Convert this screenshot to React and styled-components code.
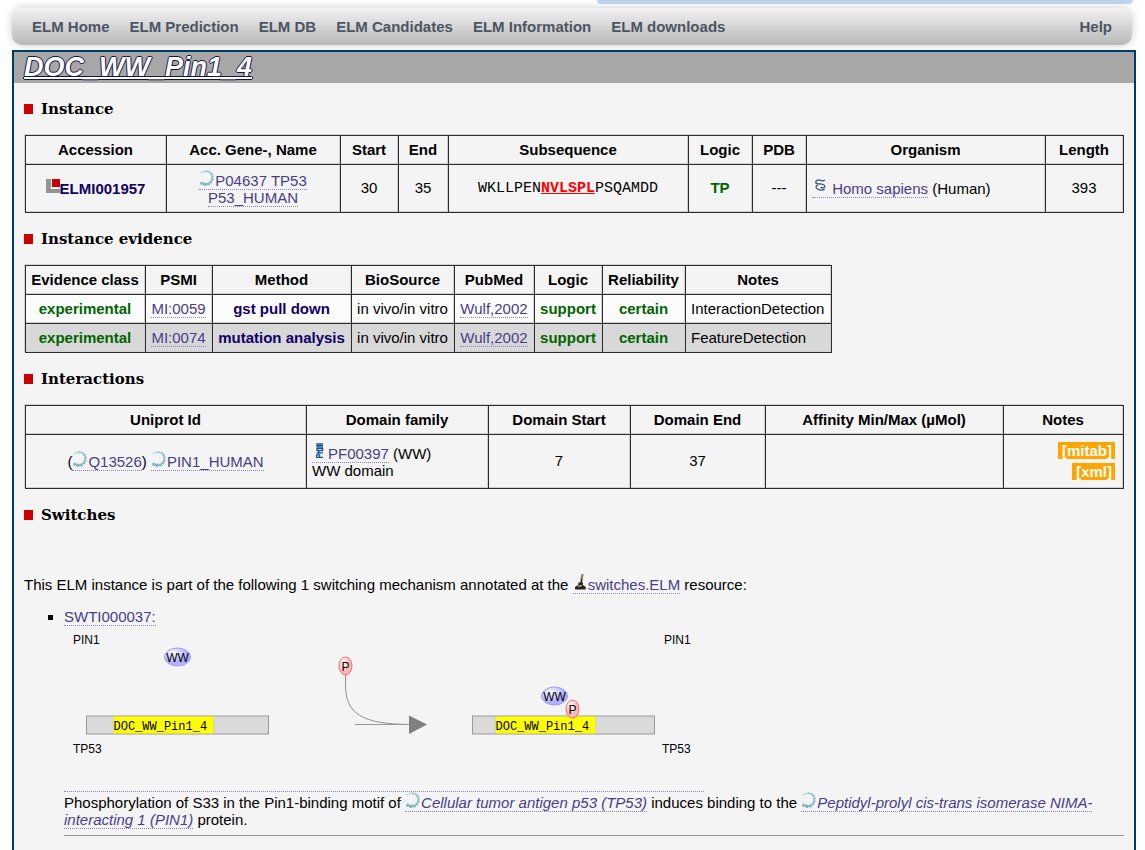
import React from "react";
import styled, { createGlobalStyle } from "styled-components";

const GlobalStyle = createGlobalStyle`
  * { box-sizing: border-box; }
  body {
    margin: 0;
    background: #fff;
    color: #000;
    font-family: Arial, "Liberation Sans", sans-serif;
    font-size: 15px;
    line-height: 17px;
  }
`;

const Page = styled.div`
  min-height: 100vh;
  display: flex;
  flex-direction: column;
`;

const SearchEdge = styled.div`
  width: 536px;
  height: 4px;
  margin: 0 12px 4px auto;
  background: #ccc;
  border: solid #b9d9fb;
  border-width: 0 3px 3px;
  border-radius: 0 0 4px 4px;
`;

const Nav = styled.nav`
  display: flex;
  gap: 20px;
  height: 37px;
  margin: 0 13px 5px 12px;
  padding: 10px 20px;
  border-radius: 10px;
  background: linear-gradient(#f2f2f2, #b8b8b8);
  box-shadow: 0 0 10px rgba(0, 0, 0, 0.2);
`;

const NavLink = styled.a`
  color: #4b5563;
  font-weight: bold;
  text-decoration: none;
  white-space: nowrap;
  margin-left: ${(p) => (p.$end ? "auto" : "0")};
`;

const Main = styled.main`
  flex: 1;
  margin: 0 9px 0 12px;
  border: solid #003a66;
  border-width: 2px 2px 0;
  background: #f4f4f4;
`;

const TitleBar = styled.header`
  height: 31px;
  padding: 0 10px;
  background: #a7a7a7;
`;

const Title = styled.h1`
  margin: 0;
  font-size: 27px;
  line-height: 30px;
  font-style: italic;
`;

const TitleLink = styled.a`
  color: #fff;
  text-decoration: underline;
  text-decoration-skip-ink: none;
  text-decoration-thickness: 2px;
  text-underline-offset: 1px;
  text-shadow: -1px 0 #14144c, 1px 0 #14144c, 0 -1px #14144c, 0 1px #14144c;
`;

const Content = styled.div`
  padding: 16px 10px 14px;
`;

const SectionTitle = styled.h2`
  display: flex;
  align-items: center;
  gap: 8px;
  height: 20px;
  margin: 0 0 16px;
  font-family: Georgia, "DejaVu Serif", serif;
  font-size: 15px;
  line-height: 20px;

  &::before {
    content: "";
    width: 9px;
    height: 10px;
    background: #c00;
  }
`;

const DataTable = styled.table`
  width: ${(p) => (p.$narrow ? "806px" : "calc(100% - 1px)")};
  max-width: 100%;
  margin: 0 0 16px 1px;
  table-layout: fixed;
  border-collapse: collapse;
  box-shadow: -1px -1px 0 #d2d2d2;
`;

const HeadCell = styled.th`
  height: 29px;
  padding: 0 3px 2px 2px;
  border: 1px solid #2c2c2c;
  box-shadow: inset -1px -1px 0 #d0d0d0;
  white-space: nowrap;
`;

const tones = { green: "#006400", navy: "#110066" };

const Cell = styled.td`
  height: ${(p) => p.$height || 29}px;
  padding: 0 5px 2px ${(p) => (p.$align ? 5 : 4)}px;
  border: 1px solid #2c2c2c;
  box-shadow: inset -1px -1px 0 #d0d0d0;
  text-align: ${(p) => p.$align || "center"};
  font-weight: ${(p) => (p.$tone ? "bold" : "normal")};
  color: ${(p) => tones[p.$tone] || "#000"};
`;

const EvidenceRow = styled.tr`
  background: ${(p) => (p.$shaded ? "#d8d8d8" : "#fcfcfc")};
`;

const Link = styled.a`
  color: #483d8b;
  text-decoration: none;
  border-bottom: 1px dotted #8a83c4;
  font-style: ${(p) => (p.$italic ? "italic" : "normal")};
`;

const AccessionLink = styled.a`
  color: #110066;
  text-decoration: none;
`;

const Sequence = styled.code`
  font-family: "Liberation Mono", monospace;
  font-size: 15px;
`;

const Motif = styled.strong`
  color: #f00;
  text-decoration: underline;
`;

const Downloads = styled.div`
  display: flex;
  flex-direction: column;
  align-items: flex-end;
  gap: 4px;
  padding-right: 3px;
`;

const Download = styled.a`
  padding: 0 3px 0 4px;
  background: orange;
  color: #fff;
  font-weight: bold;
  text-decoration: none;
`;

const Intro = styled.p`
  margin: 49px 0 15px;
`;

const SwitchList = styled.ul`
  margin: 0;
  padding: 0 0 0 40px;
  list-style: square;
`;

const DiagramLink = styled.a`
  display: block;
  width: 640px;
  max-width: 100%;
  border-bottom: 1px dotted #8a83c4;
`;

const Diagram = styled.svg`
  display: block;
  width: 100%;
  font-family: Arial, "Liberation Sans", sans-serif;
  font-size: 12px;
`;

const Description = styled.p`
  margin: 0;
`;

const Rule = styled.hr`
  margin: 7px 0 0;
  border: solid #999;
  border-width: 1px 0 0;
`;

const Icon = styled.svg`
  width: ${(p) => p.$w || 16}px;
  height: 16px;
  vertical-align: baseline;
`;

const ring = [
  [2.6, 2.4, 1, 0.4], [5, 1.5, 1.1, 0.5], [7.7, 1.2, 1.2, 0.6], [10.4, 2, 1.3, 0.65],
  [12.4, 3.9, 1.3, 0.75], [13.4, 6.6, 1.4, 0.75], [13.2, 9.5, 1.4, 0.75], [11.8, 12, 1.5, 0.8],
  [9.3, 13.9, 1.7, 0.8], [6, 14.2, 1.8, 0.9], [2.8, 13.3, 1.8, 0.8],
];

const UniprotIcon = () => (
  <Icon viewBox="0 0 16 16" aria-hidden="true">
    {ring.map(([x, y, r, o]) => (
      <circle key={`${x}-${y}`} cx={x} cy={y} r={r} fill="#66adb8" opacity={o} />
    ))}
  </Icon>
);

const ElmIcon = () => (
  <Icon $w={14} viewBox="0 0 14 16" aria-hidden="true">
    <path d="M0 1H5V11H14V15H0Z" fill="#949494" />
    <rect x="5" y="1" width="9" height="9" fill="#fff" />
    <rect x="6" y="1" width="8" height="8" fill="#c80000" />
  </Icon>
);

const TaxonomyIcon = () => (
  <Icon viewBox="0 0 16 16" aria-hidden="true">
    <g fill="none" stroke="#34577c" strokeWidth="1.3">
      <path d="M3.5 4.5C4 2.5 6 1.5 8 2.2C10 3 12 2.8 12.8 1.8" />
      <path d="M3.5 4.5C4.5 7 12 4.8 12.8 8.2C13 10 10.5 10.2 8.5 9.4" />
      <path d="M6.3 6.6C3.5 7.2 3.3 10 5.5 11C8 12.4 11 12.2 12.7 11" />
    </g>
  </Icon>
);

const PfamIcon = () => (
  <Icon viewBox="0 0 16 16" aria-hidden="true">
    <g fill="none" stroke="#18558f" strokeWidth="1.3">
      <path d="M4 14.4H11M4.6 14V11.8H7.6V14M4.6 9.8H11M6.6 11V8.3M5 7.6H10.6V5.6H5ZM4.6 4H11M5 4V.8H11M5 2.4H11" />
    </g>
  </Icon>
);

const SwitchIcon = () => (
  <Icon $w={15} viewBox="0 0 15 16" aria-hidden="true">
    <path d="M8 10L9.3 1.5" stroke="#3b3424" strokeWidth="1.8" />
    <path d="M8.6 4L9.4 0.8" stroke="#8a8066" strokeWidth="2.2" strokeLinecap="round" />
    <path d="M5.5 8.5H10L9.8 11L12.8 13V15.5H2V13L5.3 11Z" fill="#29241a" />
    <path d="M5 12.5L9 11.5" stroke="#aaa07f" strokeWidth="1.3" />
  </Icon>
);

const Domain = ({ x, y }) => (
  <g>
    <ellipse cx={x} cy={y} rx="13" ry="9" fill="url(#domainFill)" stroke="#9c9cf5" />
    <text x={x} y={y + 5} textAnchor="middle">WW</text>
  </g>
);

const Phosphate = ({ x, y }) => (
  <g>
    <ellipse cx={x} cy={y} rx="6.5" ry="9" fill="url(#phosphateFill)" stroke="#f07070" />
    <text x={x} y={y + 5} textAnchor="middle">P</text>
  </g>
);

const Protein = ({ x, motif }) => (
  <g>
    <rect x={x} y="91" width="182" height="18" fill="#dadada" stroke="#999" />
    <rect x={motif} y="91.5" width="100" height="17" fill="#ff0" stroke="#d8c860" strokeWidth=".5" />
    <text x={motif} y="105" fontFamily="'Liberation Mono', monospace">DOC_WW_Pin1_4</text>
  </g>
);

const SwitchDiagram = () => (
  <Diagram viewBox="0 0 640 166" role="img" aria-label="Switch diagram">
    <defs>
      <radialGradient id="domainFill" cx=".35" cy=".3">
        <stop offset="0" stopColor="#fff" />
        <stop offset="1" stopColor="#b0b0ff" />
      </radialGradient>
      <radialGradient id="phosphateFill" cx=".35" cy=".3">
        <stop offset="0" stopColor="#fff" />
        <stop offset="1" stopColor="#ffb4b4" />
      </radialGradient>
    </defs>
    <text x="9" y="19">PIN1</text>
    <Domain x={113.5} y={32} />
    <Protein x={22.5} motif={49.5} />
    <text x="9" y="128">TP53</text>
    <path d="M281.5 50V60C281.5 89 298 99 346 99.5" fill="none" stroke="#909090" />
    <path d="M291 99.5H346" stroke="#999" />
    <path d="M345 90.5L363 99.5L345 109Z" fill="#808080" />
    <Phosphate x={281.5} y={41} />
    <text x="600" y="19">PIN1</text>
    <Protein x={408.5} motif={431.5} />
    <Domain x={490.5} y={71} />
    <Phosphate x={508.5} y={84} />
    <text x="598" y="128">TP53</text>
  </Diagram>
);

const Columns = ({ widths }) => (
  <colgroup>
    {widths.map((w, i) => (
      <col key={i} width={w || undefined} />
    ))}
  </colgroup>
);

const Head = ({ labels }) => (
  <thead>
    <tr>
      {labels.map((label) => (
        <HeadCell key={label} scope="col">{label}</HeadCell>
      ))}
    </tr>
  </thead>
);

const navItems = ["ELM Home", "ELM Prediction", "ELM DB", "ELM Candidates", "ELM Information", "ELM downloads"];

const evidence = [
  { psmi: "MI:0059", method: "gst pull down", notes: "InteractionDetection" },
  { psmi: "MI:0074", method: "mutation analysis", notes: "FeatureDetection" },
];

export default function App() {
  return (
    <Page>
      <GlobalStyle />
      <SearchEdge />
      <Nav>
        {navItems.map((item) => (
          <NavLink key={item} href="#">{item}</NavLink>
        ))}
        <NavLink href="#" $end>Help</NavLink>
      </Nav>
      <Main>
        <TitleBar>
          <Title><TitleLink href="#">DOC_WW_Pin1_4</TitleLink></Title>
        </TitleBar>
        <Content>
          <SectionTitle>Instance</SectionTitle>
          <DataTable>
            <Columns widths={[141, 174, 58, 50, 240, 64, 54, 0, 78]} />
            <Head labels={["Accession", "Acc. Gene-, Name", "Start", "End", "Subsequence", "Logic", "PDB", "Organism", "Length"]} />
            <tbody>
              <tr>
                <Cell $height={48} $tone="navy">
                  <AccessionLink href="#"><ElmIcon />ELMI001957</AccessionLink>
                </Cell>
                <Cell><Link href="#"><UniprotIcon />P04637 TP53<br />P53_HUMAN</Link></Cell>
                <Cell>30</Cell>
                <Cell>35</Cell>
                <Cell><Sequence>WKLLPEN<Motif>NVLSPL</Motif>PSQAMDD</Sequence></Cell>
                <Cell $tone="green">TP</Cell>
                <Cell>---</Cell>
                <Cell $align="left"><Link href="#"><TaxonomyIcon /> Homo sapiens</Link> (Human)</Cell>
                <Cell>393</Cell>
              </tr>
            </tbody>
          </DataTable>

          <SectionTitle>Instance evidence</SectionTitle>
          <DataTable $narrow>
            <Columns widths={[120, 67, 139, 103, 80, 68, 83, 146]} />
            <Head labels={["Evidence class", "PSMI", "Method", "BioSource", "PubMed", "Logic", "Reliability", "Notes"]} />
            <tbody>
              {evidence.map((row, i) => (
                <EvidenceRow key={row.psmi} $shaded={i % 2 === 1}>
                  <Cell $tone="green">experimental</Cell>
                  <Cell><Link href="#">{row.psmi}</Link></Cell>
                  <Cell $tone="navy">{row.method}</Cell>
                  <Cell>in vivo/in vitro</Cell>
                  <Cell><Link href="#">Wulf,2002</Link></Cell>
                  <Cell $tone="green">support</Cell>
                  <Cell $tone="green">certain</Cell>
                  <Cell $align="left">{row.notes}</Cell>
                </EvidenceRow>
              ))}
            </tbody>
          </DataTable>

          <SectionTitle>Interactions</SectionTitle>
          <DataTable>
            <Columns widths={[281, 182, 142, 135, 0, 120]} />
            <Head labels={["Uniprot Id", "Domain family", "Domain Start", "Domain End", "Affinity Min/Max (µMol)", "Notes"]} />
            <tbody>
              <tr>
                <Cell $height={54}>
                  (<Link href="#"><UniprotIcon />Q13526</Link>) <Link href="#"><UniprotIcon />PIN1_HUMAN</Link>
                </Cell>
                <Cell $align="left">
                  <Link href="#"><PfamIcon />PF00397</Link> (WW)<br />WW domain
                </Cell>
                <Cell>7</Cell>
                <Cell>37</Cell>
                <Cell />
                <Cell>
                  <Downloads>
                    <Download href="#">[mitab]</Download>
                    <Download href="#">[xml]</Download>
                  </Downloads>
                </Cell>
              </tr>
            </tbody>
          </DataTable>

          <SectionTitle>Switches</SectionTitle>
          <Intro>
            This ELM instance is part of the following 1 switching mechanism annotated at the{" "}
            <Link href="#"><SwitchIcon />switches.ELM</Link> resource:
          </Intro>
          <SwitchList>
            <li>
              <Link href="#">SWTI000037:</Link>
              <DiagramLink href="#"><SwitchDiagram /></DiagramLink>
              <Description>
                Phosphorylation of S33 in the Pin1-binding motif of{" "}
                <Link href="#" $italic><UniprotIcon />Cellular tumor antigen p53 (TP53)</Link> induces binding to the{" "}
                <Link href="#" $italic><UniprotIcon />Peptidyl-prolyl cis-trans isomerase NIMA-interacting 1 (PIN1)</Link> protein.
              </Description>
              <Rule />
            </li>
          </SwitchList>
        </Content>
      </Main>
    </Page>
  );
}
